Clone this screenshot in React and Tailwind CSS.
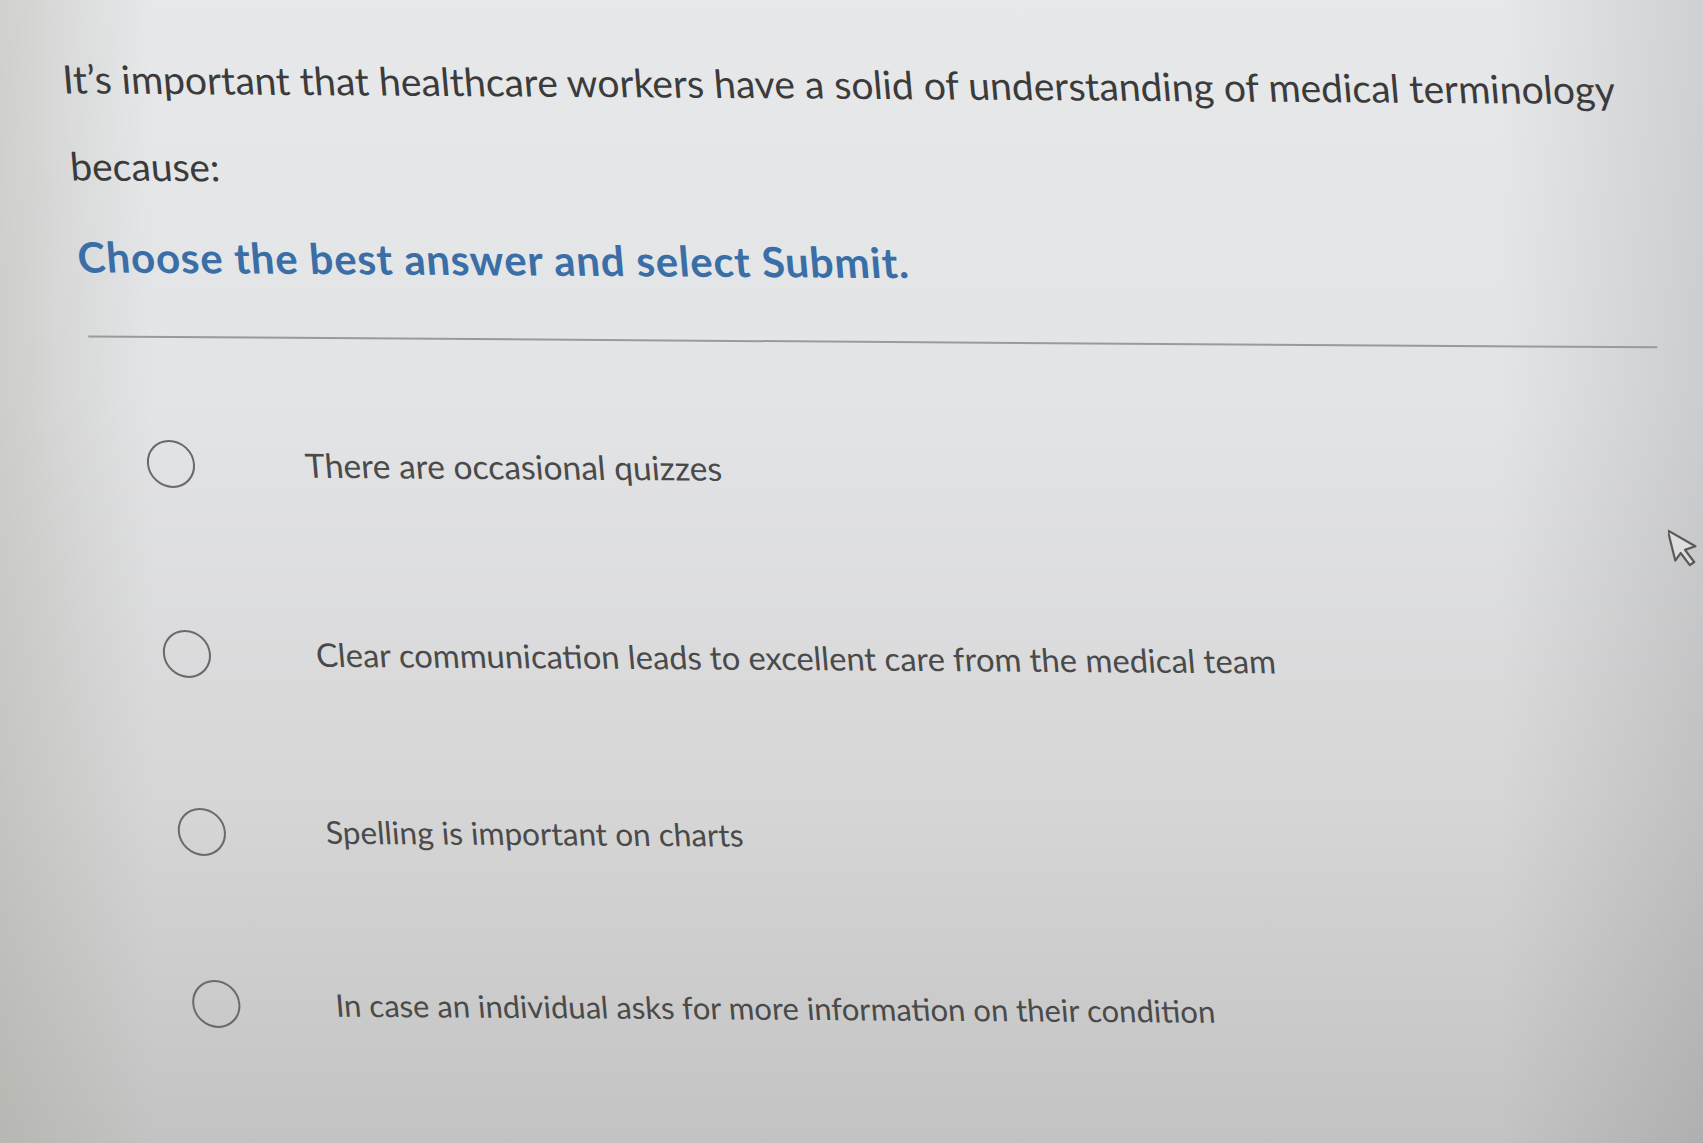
import React, { useState } from "react";

// sizes and offsets per row follow the photo's perspective
const options = [
    { text: "There are occasional quizzes", row: "", label: "ml-[110px] text-[33.5px]" },
    { text: "Clear communication leads to excellent care from the medical team", row: "mt-[142px]", label: "ml-[105px] text-[32.7px]" },
    { text: "Spelling is important on charts", row: "mt-[130px]", label: "ml-[100px] text-[31.5px]" },
    { text: "In case an individual asks for more information on their condition", row: "mt-[124px]", label: "ml-[95px] text-[31px]" },
];

const App = () => {
    const [selected, setSelected] = useState(null);

    return (
        <div
            className="relative h-screen w-full overflow-hidden bg-[image:linear-gradient(to_right,rgba(150,150,135,0.28),rgba(150,150,135,0)_9%,rgba(0,0,0,0)_88%,rgba(0,0,0,0.1)),linear-gradient(to_bottom,#e7e8ea,#e3e4e6_35%,#d6d6d7_70%,#c3c3c3)]"
            style={{ fontFamily: "Lato, 'Open Sans', sans-serif" }}
        >
            <div className="origin-top-left skew-x-[4.8deg] skew-y-[0.4deg] pl-[56px] pt-[54px]">
                {/* Question */}
                <p className="text-[39px] leading-[48px] text-[#3b3b3b]">
                    It’s important that healthcare workers have a solid of understanding of medical terminology
                </p>
                <p className="mt-[39px] text-[39px] leading-[48px] text-[#3b3b3b]">because:</p>

                <p className="mt-[43px] text-[42px] font-bold leading-[48px] tracking-[0.8px] text-[#3a6ea6]">
                    Choose the best answer and select Submit.
                </p>

                <div className="ml-[4px] mt-[55px] w-[1568px] border-t-2 border-[#9a9a9a]" />

                {/* Answers */}
                <div className="mt-[102px] flex flex-col pl-[52px]">
                    {options.map((opt, i) => (
                        <button
                            key={i}
                            type="button"
                            onClick={() => setSelected(i)}
                            className={`flex h-[48px] items-center text-left ${opt.row}`}
                        >
                            <span className="flex h-[48px] w-[48px] shrink-0 items-center justify-center rounded-full border-2 border-[#6a6a6a]">
                                {selected === i && <span className="h-[24px] w-[24px] rounded-full bg-[#3a6ea6]" />}
                            </span>
                            <span className={`whitespace-nowrap text-[#4a4a4a] ${opt.label}`}>{opt.text}</span>
                        </button>
                    ))}
                </div>
            </div>

            {/* mouse pointer */}
            <svg
                className="absolute left-[1668px] top-[524px] h-[46px] w-[34px]"
                viewBox="0 0 34 46"
                fill="none"
            >
                <path
                    d="M4 3 L4 34 L11 28 L17 42 L22 40 L16 26 L27 25 Z"
                    stroke="#5a5a5a"
                    strokeWidth="2.2"
                    strokeLinejoin="round"
                    fill="#dedede"
                    transform="rotate(-14 16 22)"
                />
            </svg>
        </div>
    );
};

export default App;
